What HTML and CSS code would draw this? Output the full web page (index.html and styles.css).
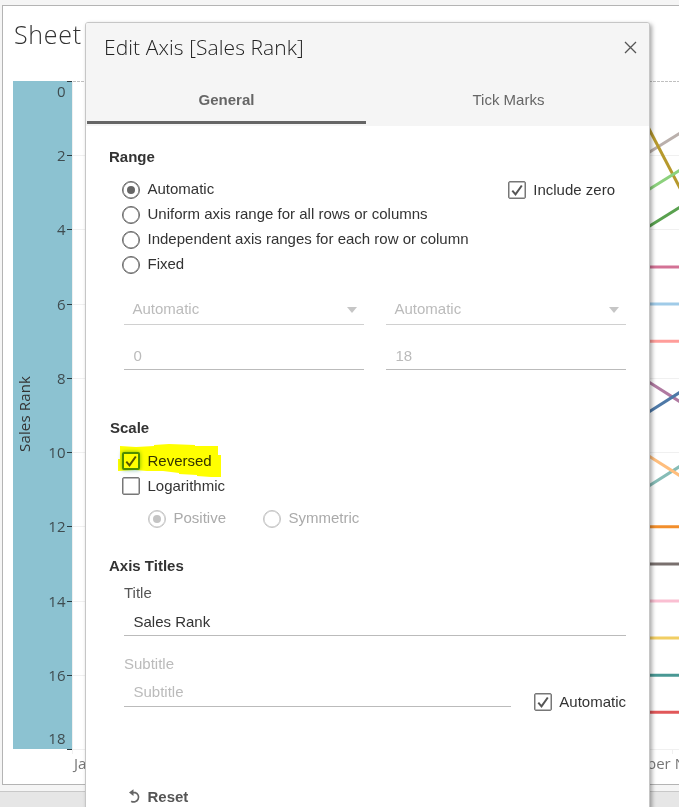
FILE: index.html
```html
<!DOCTYPE html>
<html lang="en">
<head>
<meta charset="utf-8">
<title>Edit Axis [Sales Rank]</title>
<link rel="stylesheet" href="styles.css">
</head>
<body>
<main class="workspace">
  <section class="worksheet">
    <svg class="chart" width="676" height="778" viewBox="3 6 676 778">
      <text class="sheet-title" x="14" y="44" textLength="67">Sheet</text>
      <rect class="axis-band" x="13" y="81" width="59" height="668"/>
      <path class="grid" d="M72 155.5H679M72 229.5H679M72 304.5H679M72 378.5H679M72 452.5H679M72 526.5H679M72 601.5H679M72 675.5H679M72 749.5H679M72.5 81V754M672.5 750V754"/>
      <path class="zero-line" d="M73 81.5H679"/>
      <path class="ticks" d="M67 81.5H72M67 155.5H72M67 229.5H72M67 304.5H72M67 378.5H72M67 452.5H72M67 526.5H72M67 601.5H72M67 675.5H72M67 749.5H72"/>
      <g class="labels">
        <text x="65.5" y="97">0</text><text x="65.5" y="161">2</text><text x="65.5" y="235">4</text>
        <text x="65.5" y="310">6</text><text x="65.5" y="384">8</text><text x="65.5" y="458">10</text>
        <text x="65.5" y="532">12</text><text x="65.5" y="607">14</text><text x="65.5" y="681">16</text>
        <text x="65.5" y="744">18</text>
      </g>
      <text class="axis-title" transform="translate(29.5 452) rotate(-90)" textLength="76">Sales Rank</text>
      <text class="month" x="74" y="769">January</text>
      <text class="month" x="647" y="769">ber N</text>
      <g class="series">
        <path stroke="#bab0ac" d="M648 153L682 132"/>
        <path stroke="#b6992d" d="M648 127L682 192"/>
        <path stroke="#8cd17d" d="M648 190L682 169"/>
        <path stroke="#59a14f" d="M648 227L682 206"/>
        <path stroke="#d37295" d="M648 267H682"/>
        <path stroke="#a0cbe8" d="M648 304H682"/>
        <path stroke="#ff9d9a" d="M648 341.2H682"/>
        <path stroke="#b07aa1" d="M648 381.5L682 403"/>
        <path stroke="#4e79a7" d="M648 412.5L682 391"/>
        <path stroke="#86bcb6" d="M648 486.5L682 465"/>
        <path stroke="#ffbe7d" d="M648 455.5L682 477"/>
        <path stroke="#f28e2b" d="M648 526.8H682"/>
        <path stroke="#79706e" d="M648 563.9H682"/>
        <path stroke="#fabfd2" d="M648 601H682"/>
        <path stroke="#f1ce63" d="M648 638.1H682"/>
        <path stroke="#499894" d="M648 675.2H682"/>
        <path stroke="#e15759" d="M648 712.3H682"/>
      </g>
    </svg>
  </section>
  <div class="statusbar"></div>
</main>

<div class="dialog" role="dialog">
  <header class="dialog-header">
    <div class="title-row">
      <h1 class="dialog-title">Edit Axis [Sales Rank]</h1>
      <svg class="close" width="13" height="13" viewBox="0 0 13 13"><path d="M1 1L12 12M12 1L1 12"/></svg>
    </div>
    <nav class="tabs">
      <div class="tab active">General</div>
      <div class="tab">Tick Marks</div>
    </nav>
  </header>

  <div class="dialog-body">
    <h2 class="heading">Range</h2>
    <div class="range">
      <div class="options">
        <label class="option"><span class="radio on"></span>Automatic</label>
        <label class="option"><span class="radio"></span>Uniform axis range for all rows or columns</label>
        <label class="option"><span class="radio"></span>Independent axis ranges for each row or column</label>
        <label class="option"><span class="radio"></span>Fixed</label>
      </div>
      <label class="option include"><span class="check"><svg viewBox="0 0 18 18"><path d="M4.3 9.7L7.5 13.3L13.8 4.5"/></svg></span><span class="lower">Include zero</span></label>
    </div>
    <div class="bounds">
      <div class="field select">Automatic<span class="arrow"></span></div>
      <div class="field select">Automatic<span class="arrow"></span></div>
      <div class="field value">0</div>
      <div class="field value">18</div>
    </div>

    <h2 class="heading scale-heading">Scale</h2>
    <div class="options scale-options">
      <label class="option marked"><span class="check"><svg viewBox="0 0 18 18"><path d="M4.3 9.7L7.5 13.3L13.8 4.5"/></svg></span>Reversed
        <svg class="highlight" width="106" height="34" viewBox="0 0 106 34"><path d="M3 2L19 3L37 2V1L52 0L78 1V2L101 2V11H104V33H94L80 32V31L62 30V29L46 27H30L18 26L1 27V15H3Z"/></svg>
      </label>
      <label class="option"><span class="check"></span>Logarithmic</label>
    </div>
    <div class="log-options">
      <label class="option disabled"><span class="radio on"></span>Positive</label>
      <label class="option disabled"><span class="radio"></span>Symmetric</label>
    </div>

    <h2 class="heading titles-heading">Axis Titles</h2>
    <div class="titles">
      <div class="caption">Title</div>
      <div class="field title-field">Sales Rank</div>
      <div class="caption muted">Subtitle</div>
      <div class="subtitle-row">
        <div class="field subtitle-field">Subtitle</div>
        <label class="option auto"><span class="check"><svg viewBox="0 0 18 18"><path d="M4.3 9.7L7.5 13.3L13.8 4.5"/></svg></span><span class="lower">Automatic</span></label>
      </div>
    </div>
    <div class="reset">
      <svg width="14" height="16" viewBox="0 0 14 16"><path class="arc" d="M4 3.6H7.3A4.8 4.8 0 1 1 3.2 12.2"/><path class="head" d="M1 3.6L5.5 0.3V6.9Z"/></svg>
      Reset
    </div>
  </div>
</div>
</body>
</html>
```
FILE: styles.css
```css
* { box-sizing: border-box; }
body {
  margin: 0;
  height: 807px;
  overflow: hidden;
  position: relative;
  background: #f5f5f5;
  color: #333;
  font: 15px/24px "Liberation Sans", Arial, sans-serif;
}
.workspace { height: 807px; padding-top: 5px; display: flex; flex-direction: column; }
.worksheet {
  height: 780px;
  margin-left: 2px;
  border: 1px solid #b4b4b4;
  border-right: 0;
  background: #fff;
  overflow: hidden;
}
.statusbar { flex: 1; margin-top: 6px; border-top: 1px solid #c8c8c8; background: #e6e6e6; }

.chart { display: block; font-family: "Open Sans", "Noto Sans", sans-serif; }
.sheet-title { font-size: 25px; font-weight: 300; fill: #333; }
.axis-band { fill: #8cc2d1; }
.grid { stroke: #f0f0f0; fill: none; }
.zero-line { stroke: #c0c0c0; stroke-dasharray: 3 1; }
.ticks { stroke: #2b3a3f; }
.labels { font-size: 15px; text-anchor: end; fill: #3f4c50; }
.axis-title { font-size: 15px; fill: #333; }
.month { font-size: 15px; fill: #777; }
.series { fill: none; stroke-width: 3; }

.dialog {
  position: absolute;
  left: 85px;
  top: 22px;
  width: 565px;
  height: 800px;
  border: 1px solid #c6c6c6;
  border-radius: 3px 3px 0 0;
  background: #fff;
  box-shadow: 2px 2px 4px rgba(0, 0, 0, .35);
}
.dialog-header { height: 103px; background: #f5f5f5; border-radius: 2px 2px 0 0; }
.title-row { height: 50px; padding: 0 12px 0 18px; display: flex; align-items: center; justify-content: space-between; }
.dialog-title { margin: -2px 0 0; font: 300 21px/28px "Open Sans", sans-serif; color: #222; letter-spacing: .08px; }
.close { fill: none; stroke: #555; stroke-width: 1.3; margin-top: -1px; }
.tabs { display: flex; height: 51px; padding-left: 1px; }
.tab { flex: none; width: 279px; padding-top: 15px; margin-right: 3px; text-align: center; color: #666; }
.tab.active { font-weight: bold; border-bottom: 3px solid #666; }

.dialog-body { padding: 21px 23px 0; }
.heading { margin: 0; font-size: 15px; line-height: 20px; font-weight: bold; color: #333; }
.range { margin-top: 10px; display: flex; justify-content: space-between; }
.options { padding-left: 13px; }
.option { display: flex; height: 25px; gap: 7.5px; white-space: nowrap; }
.radio, .check { flex: none; width: 18px; height: 18px; margin-top: 4px; border: 1px solid #666; background: #fff; }
.radio { border-radius: 50%; display: flex; box-shadow: inset 0 0 0 .5px #666; }
.radio.on::after { content: ""; width: 8px; height: 8px; margin: auto; border-radius: 50%; background: #666; }
.check { border-color: #777; border-radius: 2px; box-shadow: inset 0 0 0 .5px #777; }
.check svg { display: block; width: 18px; height: 18px; margin: -1px; fill: none; stroke: #555; stroke-width: 2; }
.include { margin-right: 11px; }
.include .check { margin-left: 1px; }
.lower { padding-top: 1px; }

.bounds { display: grid; grid-template-columns: 240px 240px; column-gap: 22px; grid-template-rows: 48px 45px; margin-left: 15px; }
.field { color: #bbb; border-bottom: 1px solid #bbb; }
.select { padding: 20px 7px 0 8.5px; display: flex; justify-content: space-between; border-color: #d0d0d0; }
.arrow { width: 10px; height: 6px; margin-top: 10px; background: #c6c6c6; clip-path: polygon(0 0, 100% 0, 50% 100%); }
.value { padding: 19px 9.5px 0; }

.scale-heading { margin-top: 48px; padding-left: 1px; }
.scale-options { padding-top: 10px; }
.scale-options .option { line-height: 26px; }
.marked { position: relative; }
.highlight { position: absolute; left: -5px; top: -4px; fill: #ff0; mix-blend-mode: multiply; }
.marked .check { border: 2px solid #4c8c10; box-shadow: 0 0 4px #78b8a0; }
.marked .check svg { margin: -2px; }
.log-options { display: flex; margin: 8px 0 0 39px; }
.log-options .option { width: 115px; height: 25px; line-height: 24px; }
.log-options .radio { margin-top: 4px; }
.disabled { color: #aaa; }
.disabled .radio { border-color: #c4c4c4; box-shadow: inset 0 0 0 .5px #c4c4c4; }
.disabled .radio.on::after { background: #c4c4c4; }

.titles-heading { margin-top: 25px; }
.titles { margin: 5px 0 0 15px; }
.caption { color: #555; }
.muted { color: #bbb; margin-top: 16px; }
.title-field { width: 502px; height: 31px; padding: 5px 9.5px 0; color: #333; }
.subtitle-row { display: flex; height: 35px; }
.subtitle-field { width: 387px; height: 31px; padding: 4px 9.5px 0; }
.auto { margin: 13px 0 0 23px; }
.reset { display: flex; align-items: center; gap: 5.5px; height: 24px; margin: 74px 0 0 19px; color: #555; font-weight: bold; }
.arc { fill: none; stroke: #666; stroke-width: 1.7; }
.head { fill: #666; }
```
